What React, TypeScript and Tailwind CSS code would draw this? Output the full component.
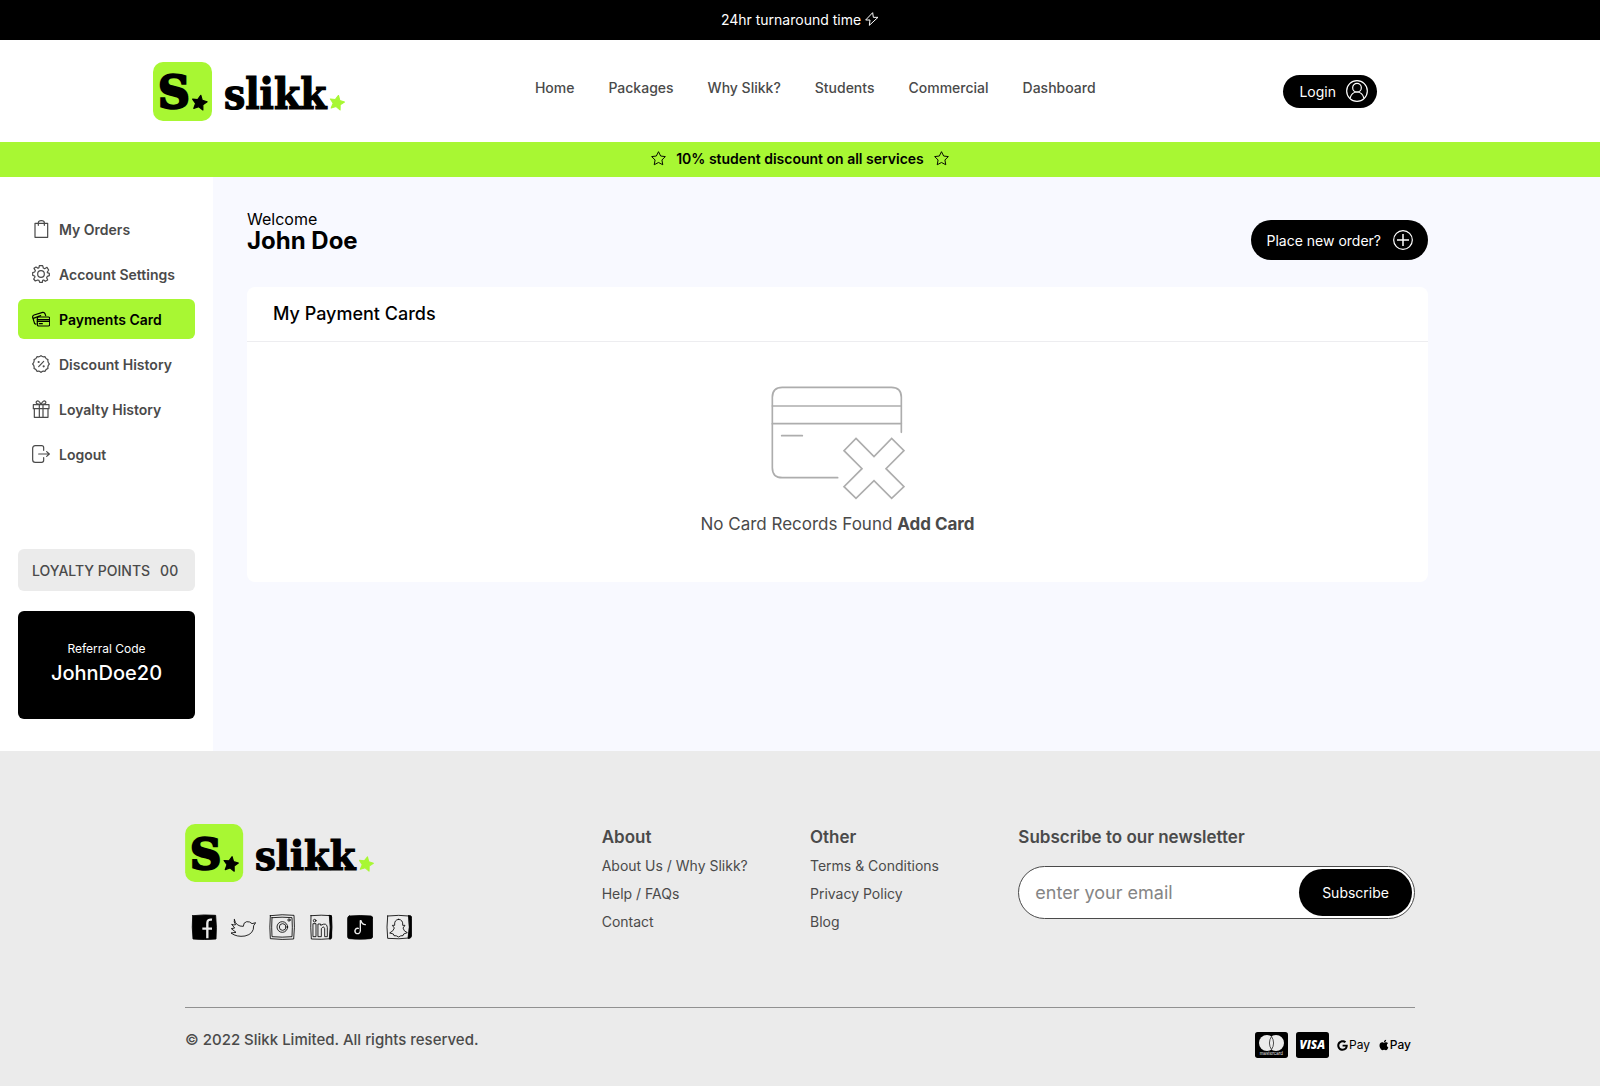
import type { ReactNode } from "react";
import { FaApple, FaGoogle } from "react-icons/fa";

const STAR = "M0 -10 L3.2 -3.6 L10 -2.8 L5 2.2 L6.3 9.2 L0 5.8 L-6.3 9.2 L-5 2.2 L-10 -2.8 L-3.2 -3.6 Z";

function Logo({ small = false }: { small?: boolean }) {
  return (
    <svg viewBox="0 0 194 59" className={small ? "h-[58px] w-[191px]" : "h-[59px] w-[194px]"} role="img" aria-label="slikk">
      <rect width="59" height="59" rx="10" fill="#a8f733" />
      <text x="5" y="46" fontFamily="DejaVu Serif, serif" fontWeight="700" fontSize="44" stroke="#000" strokeWidth="2.4">S</text>
      <path d={STAR} transform="translate(46.5 40.5) rotate(10) scale(.74)" stroke="#000" strokeWidth="1.5" strokeLinejoin="round" />
      <text x="71" y="47" fontFamily="DejaVu Serif Condensed, DejaVu Serif, serif" fontWeight="700" fontSize="42" stroke="#000" strokeWidth="1.2">slikk</text>
      <path d={STAR} transform="translate(184 40.500) rotate(12) scale(.72)" fill="#a8f733" stroke="#a8f733" strokeWidth="1.5" strokeLinejoin="round" />
    </svg>
  );
}

function StarOutline() {
  return (
    <svg viewBox="-11 -11 22 22" className="size-[15px]" fill="none" stroke="#000" strokeWidth="1.4" strokeLinejoin="round" aria-hidden="true">
      <path d={STAR} />
    </svg>
  );
}

function Glyph({ children }: { children: ReactNode }) {
  return (
    <svg viewBox="0 0 54 54" className="size-[18px] shrink-0" fill="none" stroke="currentColor" strokeWidth="3.6" strokeLinecap="round" strokeLinejoin="round" aria-hidden="true">
      {children}
    </svg>
  );
}

const menu = [
  {
    label: "My Orders",
    icon: (
      <Glyph>
        <path d="M9 10 H47 V52 H9 Z" />
        <path d="M19 16 V8 Q19 2 28 2 Q37 2 37 8 V16" />
      </Glyph>
    ),
  },
  {
    label: "Account Settings",
    icon: (
      <Glyph>
        <circle cx="27" cy="27" r="10" />
        <path d="M22 2 H32 L34 9 L38 11 L45 7 L50 15 L46 21 V23 L52 25 V32 L46 34 L44 38 L47 45 L40 49 L35 45 L32 46 L31 52 H23 L21 46 L17 45 L10 48 L5 42 L9 36 L8 33 L2 31 V23 L8 21 L10 17 L6 10 L12 6 L18 10 L21 8 Z" />
      </Glyph>
    ),
  },
  {
    label: "Payments Card",
    active: true,
    icon: (
      <Glyph>
        <rect x="16" y="21" width="37" height="27" rx="4" />
        <path d="M16 29 H53 M16 34 H53 M22 41 H31" />
        <path d="M12 42 Q8 43 7 38 L2 22 Q1 17 6 15 L32 7 Q37 6 39 11 L41 17" />
        <path d="M4 25 L26 17" />
      </Glyph>
    ),
  },
  {
    label: "Discount History",
    icon: (
      <Glyph>
        <path d="M27 2 Q32 7 39 5 Q41 12 48 14 Q46 21 52 27 Q46 33 48 40 Q41 42 39 49 Q32 47 27 52 Q22 47 15 49 Q13 42 6 40 Q8 33 2 27 Q8 21 6 14 Q13 12 15 5 Q22 7 27 2 Z" />
        <path d="M20 35 L35 19" />
        <circle cx="20" cy="21" r="1.500" />
        <circle cx="35" cy="34" r="1.500" />
      </Glyph>
    ),
  },
  {
    label: "Loyalty History",
    icon: (
      <Glyph>
        <path d="M4 14 H51 V26 H4 Z M7 26 V52 H48 V26 M22 14 V52 M33 14 V52" />
        <path d="M27 13 Q10 14 13 5 Q20 -2 27 13 Q34 -2 41 5 Q44 14 27 13 Z" />
      </Glyph>
    ),
  },
  {
    label: "Logout",
    icon: (
      <Glyph>
        <path d="M35 16 V8 Q35 2 29 2 H10 Q2 2 2 10 V44 Q2 52 10 52 H29 Q35 52 35 46 V38" />
        <path d="M20 27 H52 M44 20 L52 27 L44 34" />
      </Glyph>
    ),
  },
];

const navLinks = ["Home", "Packages", "Why Slikk?", "Students", "Commercial", "Dashboard"];

function Social({ label, children }: { label: string; children: ReactNode }) {
  return (
    <a href="#" aria-label={label}>
      <svg viewBox="0 0 78 78" className="size-[26px]" fill="none" stroke="#000" strokeWidth="2.5" strokeLinecap="round" strokeLinejoin="round" aria-hidden="true">
        {children}
      </svg>
    </a>
  );
}

function Socials() {
  return (
    <div className="mt-8 ml-1.5 flex gap-[13px]">
      <Social label="Facebook">
        <path d="M5 5 Q40 1 74 4 Q78 40 75 75 Q40 78 6 75 Q2 40 5 5 Z" fill="#000" />
        <path d="M49 73 V27 Q49 15 63 17 M34 44 H63" stroke="#ebebeb" strokeWidth="7" strokeLinecap="butt" />
      </Social>
      <Social label="Twitter">
        <path d="M13 17 Q18 38 40 37 Q40 25 50 23 Q60 22 66 29 L77 26 L71 35 Q72 60 45 66 Q20 70 3 57 L18 55 L4 44 L14 42 L5 31 Q12 34 17 32 Q10 24 13 17 Z" />
      </Social>
      <Social label="Instagram">
        <path d="M4 5 Q40 0 75 4 Q78 40 74 75 Q40 78 4 74 Q1 40 4 5 Z M9 11 Q40 8 69 11 Q71 40 69 68 Q40 71 9 68 Q7 40 9 11 Z" />
        <circle cx="40" cy="39" r="16" />
        <circle cx="41" cy="39" r="10" />
        <circle cx="60" cy="18" r="3.500" />
      </Social>
      <Social label="LinkedIn">
        <path d="M9 5 Q40 2 70 5 Q74 40 69 74 Q40 77 10 75 Q7 40 9 5 Z" />
        <path d="M64 4 Q72 2 71 10 V70 Q70 77 64 75 Q69 40 64 4 Z" fill="#000" />
        <path d="M16 29 H24 V68 H16 Z M31 30 H38 V34 Q56 24 58 40 V68 H50 V44 Q47 34 40 44 V68 H31 Z" />
        <circle cx="20" cy="20" r="4" />
      </Social>
      <Social label="TikTok">
        <path d="M7 6 Q40 3 72 6 Q79 7 77 16 V66 Q77 74 69 74 Q40 77 8 74 Q1 74 2 66 V15 Q1 7 7 6 Z" fill="#000" />
        <path d="M40 20 V51 Q38 62 27 58 Q20 51 27 44 Q30 42 34 43 M42 20 Q45 32 55 32" stroke="#ebebeb" strokeWidth="4" />
      </Social>
      <Social label="Snapchat">
        <path d="M5 6 Q40 2 68 6 Q73 40 68 72 Q40 76 5 73 Q1 40 5 6 Z" />
        <path d="M68 5 Q78 3 77 14 V63 Q76 75 66 73 Q73 40 68 5 Z" fill="#000" />
        <path d="M38 16 Q52 17 50 34 L57 34 L51 42 Q53 52 64 56 L53 60 L51 65 Q44 64 38 69 Q31 64 24 65 L22 60 L11 57 Q23 51 25 42 L19 34 L26 34 Q24 17 38 16 Z" />
      </Social>
    </div>
  );
}

function LinkColumn({ title, links }: { title: string; links: string[] }) {
  return (
    <div className="col-span-2">
      <h3 className="text-[17px] leading-[26px] font-semibold">{title}</h3>
      <ul className="mt-0.5 text-[14px] leading-7 whitespace-nowrap">
        {links.map((l) => (
          <li key={l}>
            <a href="#">{l}</a>
          </li>
        ))}
      </ul>
    </div>
  );
}

export default function App() {
  return (
    <div className="bg-white font-['Inter',sans-serif] text-[#4a4a4a]">
      <div className="flex h-10 items-center justify-center gap-1 bg-black pb-0.5 text-[14px] text-white">
        <span>24hr turnaround time</span>
        <svg viewBox="0 0 42 42" className="size-3.5" fill="none" stroke="#fff" strokeWidth="3" strokeLinejoin="round" aria-hidden="true">
          <path d="M23 2 L2 24 L15 24 L13 40 L39 16 L25 16 Z" />
        </svg>
      </div>

      <header className="flex h-[102px] items-center justify-between pr-[223px] pl-[153px]">
        <Logo />
        <nav className="mb-2 flex gap-[34px] text-[14px] font-medium">
          {navLinks.map((l) => (
            <a key={l} href="#">{l}</a>
          ))}
        </nav>
        <button type="button" className="flex h-[33px] items-center gap-2.5 rounded-full bg-black pr-[9px] pl-4 text-[14px] text-white">
          Login
          <svg viewBox="0 0 66 66" className="size-[22px]" fill="none" stroke="#fff" strokeWidth="3.6" aria-hidden="true">
            <circle cx="33" cy="33" r="31" />
            <circle cx="33" cy="23" r="13" />
            <path d="M12 55 Q17 36 33 36 Q49 36 54 55" />
          </svg>
        </button>
      </header>

      <div className="flex h-[35px] items-center justify-center gap-2.5 bg-[#a8f733] pb-0.5 text-[14px] font-semibold text-black">
        <StarOutline />
        <span>10% student discount on all services</span>
        <StarOutline />
      </div>

      <div className="flex bg-[#f8f9ff]">
        <aside className="w-[213px] shrink-0 bg-white px-[18px] pt-8 pb-8">
          <ul className="flex flex-col gap-[5px]">
            {menu.map((m) => (
              <li key={m.label}>
                <a
                  href="#"
                  className={
                    m.active
                      ? "flex h-10 items-center gap-[9px] rounded-md bg-[#a8f733] px-3.5 text-[14px] font-semibold text-black"
                      : "flex h-10 items-center gap-[9px] rounded-md px-3.5 text-[14px] font-semibold"
                  }
                >
                  {m.icon}
                  {m.label}
                </a>
              </li>
            ))}
          </ul>
          <div className="mt-[75px] flex h-[42px] items-center gap-2.5 rounded-md bg-[#ebebeb] px-3.5 text-[14px] font-medium">
            <span>LOYALTY POINTS</span>
            <span>00</span>
          </div>
          <div className="mt-5 flex h-[108px] flex-col items-center justify-center rounded-md bg-black text-white">
            <span className="text-[12px] leading-4">Referral Code</span>
            <span className="text-[20px] leading-8 font-medium">JohnDoe20</span>
          </div>
        </aside>

        <main className="min-w-0 flex-1 pt-8 pr-[172px] pl-[34px]">
          <div className="flex items-start justify-between">
            <div>
              <p className="text-[16px] leading-5 text-black">Welcome</p>
              <h1 className="text-[24px] leading-6 font-bold text-black">John Doe</h1>
            </div>
            <button type="button" className="mt-[11px] flex h-10 items-center gap-3 rounded-full bg-black pr-[15px] pl-4 text-[14px] text-white">
              Place new order?
              <svg viewBox="0 0 60 60" className="size-5" fill="none" stroke="#fff" strokeWidth="3.6" aria-hidden="true">
                <circle cx="30" cy="30" r="28" />
                <path d="M30 12 V48 M12 30 H48" strokeWidth="4.5" />
              </svg>
            </button>
          </div>

          <section className="mt-[27px] rounded-lg bg-white">
            <h2 className="border-b border-[#ededf0] px-[26px] py-[13px] text-[18px] leading-7 font-medium text-black">My Payment Cards</h2>
            <div className="flex flex-col items-center pt-11 pb-11">
              <svg viewBox="270 46 402 342" className="h-[114px] w-[134px]" fill="none" stroke="#adadad" strokeWidth="5" strokeLinecap="round" aria-hidden="true">
                <path d="M661 185 V80 Q661 50 631 50 H304 Q274 50 274 80 V291 Q274 321 304 321 H470" />
                <path d="M274 106 H661 M274 159 H661 M302 195 H364" />
                <path d="M525 203 L579 258 L632 203 L669 240 L615 294 L669 348 L632 383 L579 330 L525 383 L489 348 L543 294 L489 240 Z" />
              </svg>
              <p className="mt-2.5 text-[17px] leading-7">
                No Card Records Found <a href="#" className="font-bold">Add Card</a>
              </p>
            </div>
          </section>
        </main>
      </div>

      <footer className="bg-[#ebebeb] px-[185px] pt-[73px] pb-7">
        <div className="grid grid-cols-12 gap-x-5 border-b border-[#919191] pb-[67px]">
          <div className="col-span-4">
            <Logo small />
            <Socials />
          </div>
          <LinkColumn title="About" links={["About Us / Why Slikk?", "Help / FAQs", "Contact"]} />
          <LinkColumn title="Other" links={["Terms & Conditions", "Privacy Policy", "Blog"]} />
          <form className="col-span-4">
            <label htmlFor="email" className="block text-[17px] leading-[26px] font-semibold">Subscribe to our newsletter</label>
            <div className="mt-4 flex h-[53px] items-center rounded-full border border-[#4a4a4a] bg-white pr-0.5">
              <input id="email" type="email" placeholder="enter your email" className="min-w-0 flex-1 bg-transparent pl-4 text-[18px] outline-none placeholder:text-[#858585]" />
              <button type="button" className="h-[47px] rounded-full bg-black px-[23px] text-[14px] text-white">Subscribe</button>
            </div>
          </form>
        </div>
        <div className="flex items-start justify-between pt-5">
          <p className="text-[15px] leading-6 font-medium">© 2022 Slikk Limited. All rights reserved.</p>
          <div className="mt-1 mr-1 flex items-center gap-2 text-black">
            <svg viewBox="0 0 99 78" className="h-[26px] w-[33px]" role="img" aria-label="Mastercard">
              <rect width="99" height="78" rx="8" />
              <circle cx="36" cy="33" r="24" fill="#ebebeb" />
              <circle cx="63" cy="33" r="24" fill="#ebebeb" />
              <path d="M49.500 13 Q37 33 49.500 53 Q62 33 49.500 13 Z" fill="#ebebeb" stroke="#000" strokeWidth="2" />
              <text x="49" y="69" textAnchor="middle" fontFamily="Inter, sans-serif" fontSize="13" fill="#ebebeb">mastercard</text>
            </svg>
            <svg viewBox="0 0 99 78" className="h-[26px] w-[33px]" role="img" aria-label="Visa">
              <rect width="99" height="78" rx="8" />
              <text x="49" y="51" textAnchor="middle" fontFamily="Open Sans, sans-serif" fontWeight="800" fontStyle="italic" fontSize="35" fill="#fff">VISA</text>
            </svg>
            <span className="flex w-[33px] items-center justify-between text-[12px]">
              <FaGoogle className="size-[11px]" />
              Pay
            </span>
            <span className="flex w-[33px] items-center justify-between text-[12px] font-medium">
              <FaApple className="size-3" />
              Pay
            </span>
          </div>
        </div>
      </footer>
    </div>
  );
}
